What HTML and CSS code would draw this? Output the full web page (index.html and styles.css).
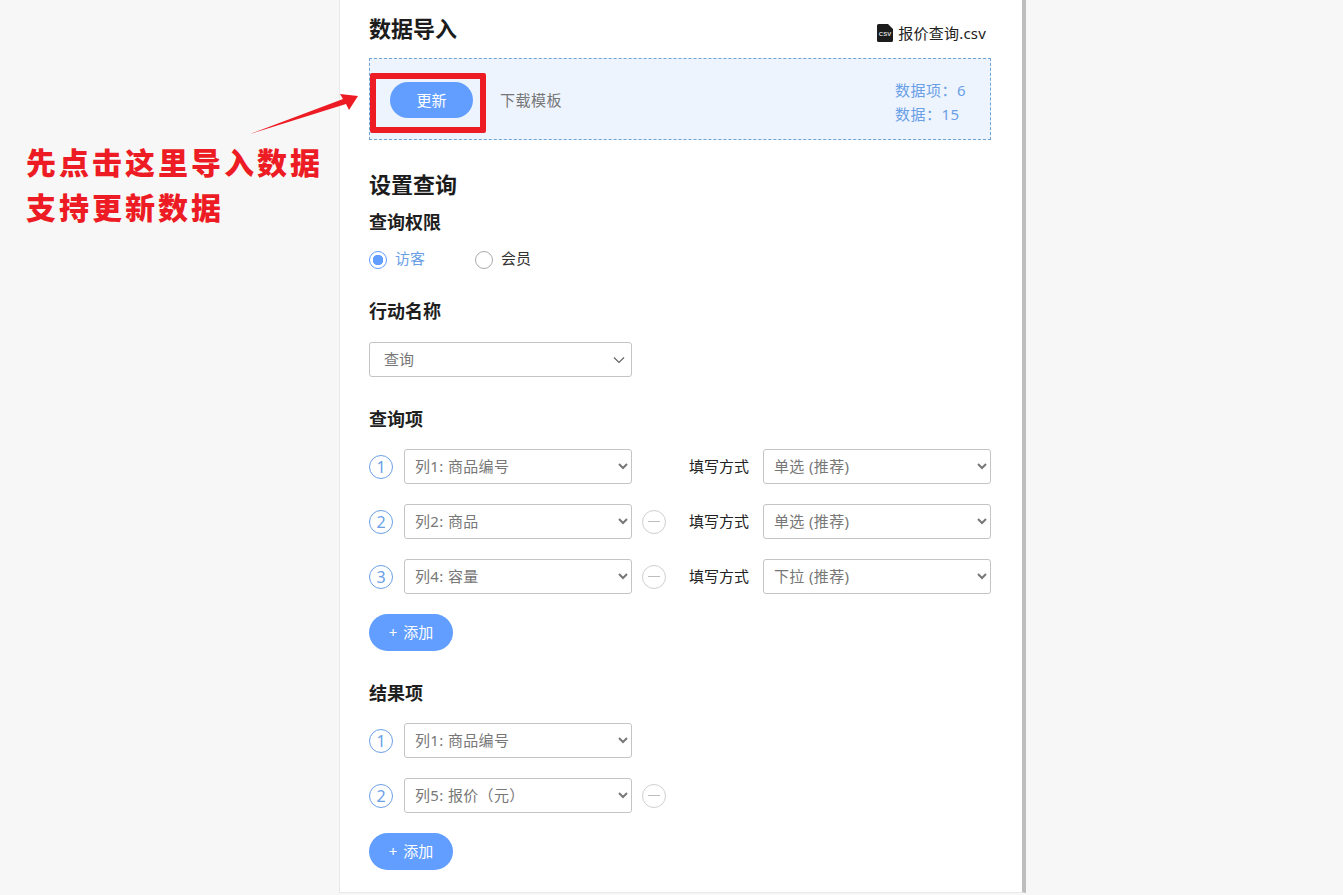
FILE: index.html
```html
<!DOCTYPE html>
<html lang="zh-CN">
<head>
<meta charset="utf-8">
<title>数据导入</title>
<link rel="stylesheet" href="styles.css">
</head>
<body>
<div class="note-layer">
  <p class="note-text">先点击这里导入数据<br>支持更新数据</p>
  <svg class="note-arrow" width="120" height="50" viewBox="0 0 120 50"><polygon points="0,43 93,8 90,3 108,5 99,19 96,13" fill="#ed1c24"/></svg>
  <div class="note-box"></div>
</div>
<main class="panel">
  <header class="head-row">
    <h2 class="title title-first">数据导入</h2>
    <div class="file">
      <svg class="file-icon" width="16" height="18" viewBox="0 0 16 18"><path d="M1.500 0H11l5 5v11.500a1.500 1.500 0 0 1-1.500 1.500h-13A1.500 1.500 0 0 1 0 16.500v-15A1.500 1.500 0 0 1 1.500 0z" fill="#1c1c1c"/><text x="8" y="11.500" class="file-icon-text" text-anchor="middle">CSV</text></svg>
      <span class="file-name">报价查询.csv</span>
    </div>
  </header>
  <section class="upload">
    <button class="btn btn-update" type="button">更新</button>
    <a class="template">下载模板</a>
    <div class="stats"><div>数据项：6</div><div>数据：15</div></div>
  </section>

  <h2 class="title title-second">设置查询</h2>
  <h3 class="label label-perm">查询权限</h3>
  <div class="radios">
    <span class="radio-item radio-on"><i class="radio"></i><span class="radio-text">访客</span></span>
    <span class="radio-item"><i class="radio"></i><span class="radio-text">会员</span></span>
  </div>

  <h3 class="label label-action">行动名称</h3>
  <div class="select-wrap">
    <select class="select select-plain"><option>查询</option></select>
    <svg class="chevron" width="12" height="8" viewBox="0 0 12 8"><path d="M1 1.500l5 5 5-5" fill="none" stroke="#666" stroke-width="1.200"/></svg>
  </div>

  <h3 class="label label-section">查询项</h3>
  <div class="rows">
    <div class="row">
      <span class="num">1</span>
      <select class="select"><option>列1: 商品编号</option></select>
      <span class="minus-empty"></span>
      <span class="way">填写方式</span>
      <select class="select"><option>单选 (推荐)</option></select>
    </div>
    <div class="row">
      <span class="num">2</span>
      <select class="select"><option>列2: 商品</option></select>
      <span class="minus"></span>
      <span class="way">填写方式</span>
      <select class="select"><option>单选 (推荐)</option></select>
    </div>
    <div class="row">
      <span class="num">3</span>
      <select class="select"><option>列4: 容量</option></select>
      <span class="minus"></span>
      <span class="way">填写方式</span>
      <select class="select"><option>下拉 (推荐)</option></select>
    </div>
  </div>
  <button class="btn btn-add" type="button">+ 添加</button>

  <h3 class="label label-section">结果项</h3>
  <div class="rows">
    <div class="row">
      <span class="num">1</span>
      <select class="select"><option>列1: 商品编号</option></select>
    </div>
    <div class="row">
      <span class="num">2</span>
      <select class="select"><option>列5: 报价（元）</option></select>
      <span class="minus"></span>
    </div>
  </div>
  <button class="btn btn-add" type="button">+ 添加</button>
</main>
</body>
</html>
```
FILE: styles.css
```css
* { box-sizing: border-box; }
html, body { margin: 0; height: 895px; overflow: hidden; }
body {
  background: #f7f7f7;
  color: #1f1f1f;
  font-family: "Noto Sans", "Noto Sans CJK SC", sans-serif;
  font-size: 15px;
  position: relative;
}
.panel {
  margin-left: 339px;
  width: 687px;
  height: 893px;
  padding: 15px 31px 0 29px;
  background: #fff;
  border-left: 1px solid #e9e9e9;
  border-bottom: 1px solid #e9e9e9;
  border-right: 4px solid #bdbdbd;
}
.head-row { display: flex; justify-content: space-between; align-items: center; height: 30px; }
.title { margin: 0; font-size: 22px; line-height: 30px; font-weight: 700; color: #1c1c1c; }
.title-first { line-height: 26px; padding-bottom: 4px; }
.file { display: flex; align-items: center; gap: 5px; font-size: 15px; line-height: 20px; margin: 5px 5px 0 0; color: #222; }
.file-name { letter-spacing: 0.2px; }
.file-icon { display: block; }
.file-icon-text { font-family: "Liberation Sans", sans-serif; font-size: 6px; font-weight: 700; fill: #ddd; }
.upload {
  margin-top: 13px;
  height: 82px;
  display: flex;
  align-items: center;
  padding-left: 20px;
  background: #edf4fe;
  border: 1px dashed #6ea3d8;
}
.btn { border: 0; background: #619eff; color: #fff; font-family: inherit; font-size: 15px; padding: 0; display: block; }
.btn-update { width: 83px; height: 36px; border-radius: 18px; line-height: 36px; margin-top: 1px; }
.template { margin: 2px 0 0 27px; color: #777; font-size: 15px; line-height: 20px; letter-spacing: 0.5px; }
.stats { margin: 5px 23px 0 auto; width: 72px; color: #6a9fe6; font-size: 15px; line-height: 24px; letter-spacing: 0.5px; white-space: nowrap; }
.title-second { margin-top: 29px; }
.label { margin: 0; font-size: 18px; line-height: 24px; font-weight: 700; color: #1f1f1f; }
.label-perm { margin-top: 11px; }
.radios { display: flex; margin-top: 14px; height: 24px; align-items: center; font-size: 15px; }
.radio-item { display: flex; align-items: center; width: 106px; color: #333; gap: 8px; }
.radio-text { line-height: 20px; margin-top: -4px; }
.radio { display: block; width: 18px; height: 18px; border-radius: 50%; border: 1px solid #aaa; background: #fff; }
.radio-on { color: #6a9fe6; }
.radio-on .radio { border-color: #619eff; background: radial-gradient(circle, #619eff 0 5px, #fff 5.500px); }
.label-action { margin-top: 27px; }
.select-wrap { position: relative; width: 263px; margin-top: 19px; }
.select {
  width: 228px;
  height: 35px;
  font-family: inherit;
  font-size: 15px;
  letter-spacing: 0.35px;
  color: #777;
  background-color: #fff;
  border: 1px solid #c4c4c4;
  border-radius: 3px;
  padding: 0 6px 2px;
  display: block;
  flex: none;
}
.select-plain { width: 263px; appearance: none; padding: 0 14px 2px; letter-spacing: 0; }
.chevron { position: absolute; right: 7px; top: 14px; }
.label-section { margin-top: 30px; }
.rows { display: flex; flex-direction: column; gap: 20px; margin-top: 18px; }
.row { display: flex; align-items: center; height: 35px; }
.num {
  width: 24px; height: 24px; margin-right: 11px; flex: none;
  border: 1px solid #6a9fe6; border-radius: 50%;
  color: #6a9fe6; font-size: 16px; line-height: 22px; text-align: center;
}
.minus, .minus-empty { width: 24px; height: 24px; margin-left: 10px; flex: none; position: relative; }
.minus { border: 1px solid #cfcfcf; border-radius: 50%; }
.minus::after { content: ""; position: absolute; left: 5px; right: 5px; top: 10px; height: 1px; background: #bdbdbd; }
.way { margin: -1px 14px 0 23px; width: 60px; flex: none; font-size: 15px; line-height: 20px; color: #222; }
.btn-add { width: 84px; height: 37px; border-radius: 18.500px; margin-top: 20px; line-height: 37px; font-size: 15px; word-spacing: 2px; }
.note-layer { position: absolute; inset: 0; z-index: 2; pointer-events: none; }
.note-text {
  position: absolute; left: 26px; top: 139px; margin: 0;
  font-family: "Noto Sans CJK SC", sans-serif;
  font-size: 30px; line-height: 45px; font-weight: 900; letter-spacing: 3px; color: #ed1c24;
}
.note-arrow { position: absolute; left: 250px; top: 91px; }
.note-box { position: absolute; left: 370px; top: 73px; width: 116px; height: 60px; border: 6px solid #ed1c24; border-radius: 2px; }
```
